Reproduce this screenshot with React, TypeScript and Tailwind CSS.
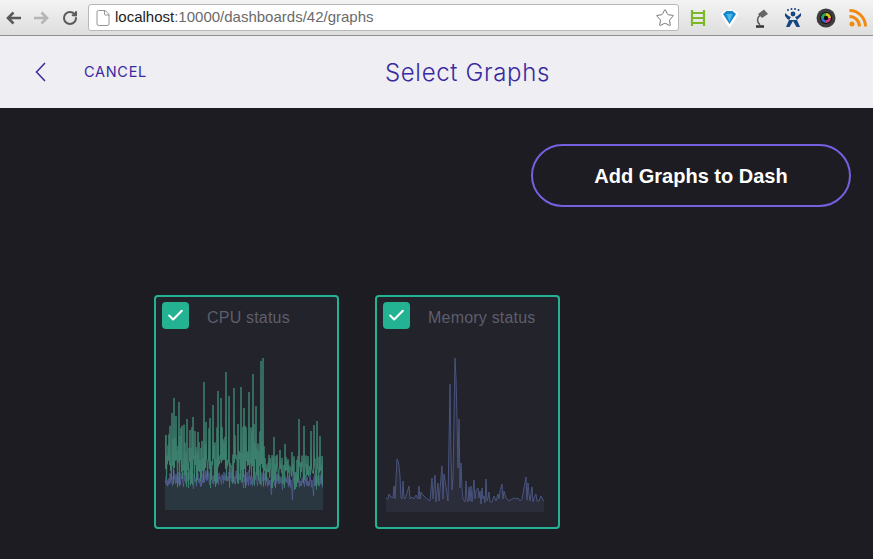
import React from "react";
import { Star, File, Check, RotateCw } from "lucide-react";

function rng(seed: number) {
  let s = seed;
  return () => {
    s = (s * 1664525 + 1013904223) % 4294967296;
    return s / 4294967296;
  };
}

// peak lists in chart pixels: [x, y]
const cpuPeaks: [number, number][] = [
  [1,77],[7,55],[9,40],[11,58],[14,44],[16,70],[22,61],[25,72],[28,59],[33,74],[39,24],[41,64],[45,60],[48,47],[53,33],[56,40],[61,14],[64,38],[69,30],[73,66],[76,29],[79,50],[84,34],[88,16],[91,48],[96,3],[98,0],[100,100],[105,100],[109,79],[115,92],[120,86],[127,94],[134,61],[139,68],[146,73],[149,67],[152,63],[155,78],[157,98],
];
const blueDips: [number, number][] = [
  [7,128],[28,131],[47,125],[78,130],[106,137],[127,142],[148,138],[15,127],[60,123],[92,128],[117,132],
];

function buildCpu() {
  const r = rng(23);
  const green: string[] = [];
  const blue: string[] = [];
  const peaks = new Map(cpuPeaks);
  const dips = new Map(blueDips);
  for (let x = 0; x <= 158; x += 1) {
    const right = x > 99;
    const top = peaks.get(x) ?? (right ? 96 + r() * 20 : 66 + r() * 44);
    const low = right ? 108 + r() * 24 : 100 + r() * 30;
    green.push(`${x},${top.toFixed(1)}`, `${x + 0.5},${low.toFixed(1)}`);
    const bLow = dips.get(x) ?? (right ? 122 + r() * 8 : 120 + r() * 9);
    blue.push(`${x},${(bLow - 4 - r() * 6).toFixed(1)}`, `${x + 0.5},${bLow.toFixed(1)}`);
  }
  return { green: green.join(" "), blue: blue.join(" ") };
}

const memSeries: [number, number][] = [
  [0,140],[2,141],[3,136],[5,139],[7,140],[8,128],[9,141],[11,101],[12,103],[13,108],[14,118],[15,140],[16,141],[17,123],[18,140],[19,141],[20,138],[23,128],[24,141],[26,139],[28,141],[30,137],[32,141],[33,128],[34,141],[35,134],[36,136],[38,138],[41,141],[44,143],[46,120],[47,141],[49,117],[50,144],[52,125],[53,143],[56,108],[57,141],[58,116],[59,122],[61,136],[62,143],[64,26],[65,100],[66,132],[67,120],[68,60],[69,0],[70,20],[71,60],[72,110],[73,61],[74,130],[75,105],[76,130],[77,141],[79,144],[80,123],[81,141],[82,144],[83,129],[84,143],[85,128],[86,144],[88,122],[89,141],[90,133],[92,130],[93,140],[94,133],[95,146],[96,130],[97,141],[98,138],[99,145],[100,121],[101,143],[102,140],[103,134],[104,144],[106,144],[108,138],[110,143],[112,136],[113,141],[114,133],[116,126],[117,141],[118,133],[120,140],[123,143],[126,141],[128,140],[130,141],[132,140],[134,143],[136,141],[140,119],[141,142],[142,125],[143,136],[144,143],[146,129],[147,144],[148,140],[150,136],[151,143],[153,143],[155,138],[157,142],[158,143],
];

function CpuChart() {
  const { green, blue } = buildCpu();
  return (
    <svg width="158" height="152" viewBox="0 0 158 152" className="block">
      <polygon points={`0,152 ${blue} 158,152`} fill="#2b3740" />
      <polyline points={blue} fill="none" stroke="#4f5b8c" strokeWidth="0.9" />
      <polyline points={green} fill="none" stroke="#3d8270" strokeWidth="1" />
    </svg>
  );
}

function MemChart() {
  const pts = memSeries.map(([x, y]) => `${x},${y}`).join(" ");
  return (
    <svg width="158" height="154" viewBox="0 0 158 154" className="block">
      <polygon points={`0,154 ${pts} 158,154`} fill="#2b2d3b" />
      <polyline points={pts} fill="none" stroke="#4d5884" strokeWidth="0.9" />
    </svg>
  );
}

function GraphCard({ title, chart }: { title: string; chart: React.ReactNode }) {
  return (
    <div className="w-[185px] h-[234px] border-2 border-[#24b392] rounded-[4px] bg-[#22232b] flex flex-col">
      <div className="flex items-center pl-[6px] pt-[5px]">
        <div className="w-[27px] h-[27px] rounded-[4px] bg-[#24b392] flex items-center justify-center">
          <Check size={19} strokeWidth={2.6} color="#ffffff" />
        </div>
        <span className="ml-[18px] pt-[4px] text-[16px] leading-[20px] tracking-[0.2px] text-[#5e5e6c]">{title}</span>
      </div>
      <div className="pl-[9px] pt-[29px]">{chart}</div>
    </div>
  );
}

function ExtIcons() {
  return (
    <div className="flex items-center gap-[13px] ml-[11px]">
      <svg width="16" height="18" viewBox="0 0 16 18" fill="none" stroke="#7cb828" strokeWidth="2.2">
        <path d="M2 1v16M14 1v16M2 4h12M2 9h12M2 14h12" />
      </svg>
      <svg width="21" height="22" viewBox="-0.5 0 21 22">
        <path d="M1.5 6 Q10 -1 18.5 6 Q18 10 10 21 Q2 10 1.5 6Z" fill="#fff" />
        <path d="M3.5 7 L7 4 H13 L16.5 7 L10 17Z" fill="#1787c9" />
        <path d="M7 7 H13 L10 15Z" fill="#4db8ea" />
      </svg>
      <svg width="17" height="20" viewBox="0 0 17 20" fill="none">
        <path d="M3 18.5h8" stroke="#333" strokeWidth="2.5" />
        <path d="M7 17 Q2 12 7 7" stroke="#555" strokeWidth="1.5" />
        <path d="M5 6 L11 1.5 L15 6 L9 10Z" fill="#666" />
      </svg>
      <svg width="20" height="20" viewBox="-1 0 20 20" fill="#16457f">
        <circle cx="9" cy="6" r="2.4" />
        <circle cx="4" cy="2" r="1" /><circle cx="7.5" cy="1" r="1" /><circle cx="11" cy="1" r="1" /><circle cx="14.5" cy="2" r="1" />
        <path d="M1 5 Q4 8 7 9 L5 12 L2 19 H5.5 L9 13 L12.5 19 H16 L13 12 L11 9 Q14 8 17 5 L17 8 Q14 11 13 12 H5 Q3 11 1 8Z" />
      </svg>
      <svg width="20" height="20" viewBox="0 0 20 20">
        <circle cx="10" cy="10" r="9.5" fill="#3d3d40" />
        <circle cx="10" cy="10" r="6" fill="#111" />
        <path d="M10 5a5 5 0 0 1 5 5h-5Z" fill="#d8c21f" />
        <path d="M15 10a5 5 0 0 1-5 5v-5Z" fill="#d13a7a" />
        <path d="M10 15a5 5 0 0 1-5-5h5Z" fill="#2d6fc4" />
        <path d="M5 10a5 5 0 0 1 5-5v5Z" fill="#2ba85a" />
        <circle cx="10" cy="10" r="2.2" fill="#0c0c10" />
      </svg>
      <svg width="18" height="18" viewBox="0 0 18 18" fill="none">
        <circle cx="3" cy="15" r="2.5" fill="#f08a12" />
        <path d="M0.5 7.5a10 10 0 0 1 10 10" stroke="#f08a12" strokeWidth="3" />
        <path d="M0.5 1.5a16 16 0 0 1 16 16" stroke="#f08a12" strokeWidth="3" />
      </svg>
    </div>
  );
}

export default function App() {
  return (
    <div className="w-full h-[559px] overflow-hidden flex flex-col bg-[#1c1c22] [font-family:'Liberation_Sans',sans-serif]">
      <div className="h-[36px] shrink-0 bg-gradient-to-b from-[#f3f3f3] to-[#dedede] border-b border-[#8f8f8f] flex items-center pl-[6px]">
        <div className="flex items-center gap-[13px] w-[82px]">
          <svg width="15" height="14" viewBox="0 0 15 14" fill="none" stroke="#5a5a5a" strokeWidth="2.6"><path d="M7.5 1.5 L2 7 L7.5 12.5 M2.5 7 H15" /></svg>
          <svg width="15" height="14" viewBox="0 0 15 14" fill="none" stroke="#b5b5b5" strokeWidth="2.6"><path d="M7.5 1.5 L13 7 L7.5 12.5 M12.5 7 H0" /></svg>
          <RotateCw size={16} strokeWidth={3} color="#5a5a5a" />
        </div>
        <div className="w-[591px] h-[27px] bg-white border border-[#b8b8b8] rounded-[3px] flex items-center pl-[5px] pr-[3px]">
          <File size={18} strokeWidth={1.2} color="#8a8a8a" />
          <span className="ml-[3px] text-[15px] text-[#6a6a6a]"><span className="text-[#222]">localhost</span>:10000/dashboards/42/graphs</span>
          <Star size={20} strokeWidth={1.2} color="#777" className="ml-auto" />
        </div>
        <ExtIcons />
      </div>

      <div className="h-[72px] shrink-0 bg-[#eeeef3] flex items-center relative">
        <svg width="11" height="20" viewBox="0 0 11 20" fill="none" stroke="#3a2aa0" strokeWidth="1.5" className="ml-[35px]"><path d="M10 1 L1.5 10 L10 19" /></svg>
        <span className="ml-[38px] text-[14.5px] tracking-[0.7px] text-[#3a2aa0] [font-family:'Inter',sans-serif]">CANCEL</span>
        <span className="absolute left-[385px] top-[22px] text-[24px] leading-[30px] tracking-[0.65px] font-light text-[#3a2aa0] [font-family:'Inter',sans-serif]">Select Graphs</span>
      </div>

      <div className="flex-1 flex flex-col">
        <div className="flex justify-end pt-[36px] pr-[22px]">
          <button className="w-[320px] h-[63px] rounded-[32px] border-2 border-[#7560e0] text-white text-[20px] font-bold">Add Graphs to Dash</button>
        </div>
        <div className="flex gap-[36px] pl-[154px] pt-[88px]">
          <GraphCard title="CPU status" chart={<CpuChart />} />
          <GraphCard title="Memory status" chart={<MemChart />} />
        </div>
      </div>
    </div>
  );
}
